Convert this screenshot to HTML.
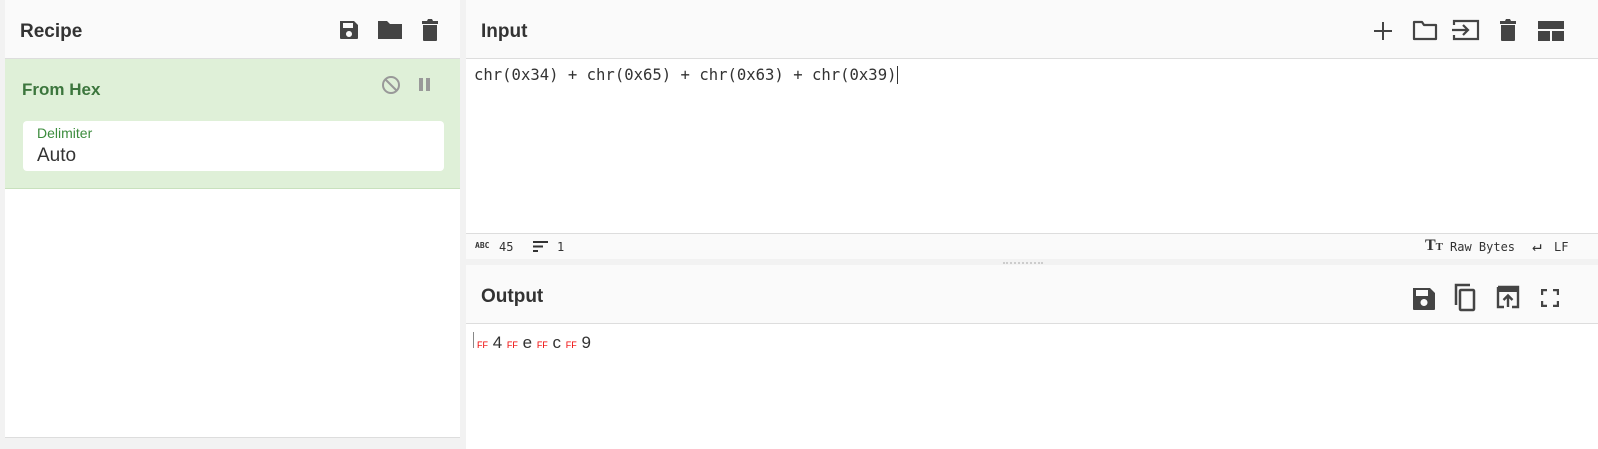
<!DOCTYPE html>
<html><head><style>
*{box-sizing:border-box;margin:0;padding:0}
body{width:1598px;height:449px;background:#f2f2f2;font-family:"Liberation Sans",sans-serif;position:relative;overflow:hidden}
.abs{position:absolute}
.hdr{background:#fafafa;border-bottom:1px solid #ddd;height:59px}
.title{font-weight:bold;font-size:19px;color:#333;position:absolute;top:21px}
.mono{font-family:"DejaVu Sans Mono","Liberation Mono",monospace}
svg{position:absolute}
</style></head><body>
<div class="abs" style="left:5px;top:0;width:455px;height:438px;background:#fff;border-bottom:1px solid #ddd">
 <div class="hdr" style="position:relative"><div class="title" style="left:15px">Recipe</div>
  <svg style="left:332px;top:18px" width="24" height="24" viewBox="0 0 24 24"><path fill="#444" d="M3 3h14l4 4v13a1 1 0 0 1-1 1H4a1 1 0 0 1-1-1zM6 5v5h10V5zm6 8a3 3 0 1 0 0.01 0z"/></svg>
  <svg style="left:371px;top:18px" width="28" height="24" viewBox="0 0 28 24"><path fill="#444" d="M2 3h9l3 3h12v15H2z"/></svg>
  <svg style="left:414px;top:17px" width="22" height="26" viewBox="0 0 22 26"><path fill="#444" d="M3 4h5l1-2h4l1 2h5v3H3zM4 8h14v15a1 1 0 0 1-1 1H5a1 1 0 0 1-1-1z"/></svg>
 </div>
 <div style="position:absolute;top:59px;left:0;width:455px;height:130px;background:#dff0d8;border-bottom:1px solid #c8e1bd">
  <div style="position:absolute;left:17px;top:21px;font-weight:bold;font-size:17px;color:#3c763d">From Hex</div>
  <svg style="left:376px;top:16px" width="20" height="20" viewBox="0 0 20 20"><circle cx="10" cy="10" r="8" fill="none" stroke="#999" stroke-width="2"/><path d="M4.5 4.5l11 11" stroke="#999" stroke-width="2"/></svg>
  <div style="position:absolute;left:414px;top:19px;width:4px;height:13px;background:#999"></div>
  <div style="position:absolute;left:421px;top:19px;width:4px;height:13px;background:#999"></div>
  <div style="position:absolute;left:18px;top:62px;width:421px;height:50px;background:#fff;border-radius:4px">
   <div style="position:absolute;left:14px;top:4px;font-size:14px;color:#3c8c3d">Delimiter</div>
   <div style="position:absolute;left:14px;top:24px;font-size:19px;color:#333">Auto</div>
  </div>
 </div>
</div>
<div class="abs" style="left:466px;top:0;width:1132px;height:259px;background:#fff">
 <div class="hdr" style="position:relative"><div class="title" style="left:15px">Input</div>
  <svg style="left:906px;top:20px" width="22" height="22" viewBox="0 0 22 22"><path d="M11 2v18M2 11h18" stroke="#444" stroke-width="2"/></svg>
  <svg style="left:946px;top:20px" width="26" height="21" viewBox="0 0 26 21"><path d="M2 2h8l2 3h12v14H2z" fill="none" stroke="#444" stroke-width="2.2" stroke-linejoin="round"/></svg>
  <svg style="left:986px;top:19px" width="28" height="22" viewBox="0 0 28 22"><path d="M2 6V2h24v18H2v-4" fill="none" stroke="#444" stroke-width="2.2"/><path d="M0 11h15M11 6l5 5-5 5" fill="none" stroke="#444" stroke-width="2.2"/></svg>
  <svg style="left:1033px;top:18px" width="18" height="24" viewBox="0 0 18 24"><path fill="#444" d="M1 3h5l1-2h4l1 2h5v3H1zM2 7h14v15a1 1 0 0 1-1 1H3a1 1 0 0 1-1-1z"/></svg>
  <svg style="left:1072px;top:21px" width="26" height="20" viewBox="0 0 26 20"><path fill="#444" d="M0 0h26v8H0zM0 10h12v10H0zM14 10h12v10H14z"/></svg>
 </div>
 <div class="mono" style="position:absolute;left:8px;top:66px;font-size:15.6px;color:#333">chr(0x34) + chr(0x65) + chr(0x63) + chr(0x39)<span style="border-left:1px solid #333;margin-left:1px"></span></div>
 <div style="position:absolute;left:0;top:233px;width:1132px;height:26px;background:#fafafa;border-top:1px solid #ddd" class="mono">
  <span style="position:absolute;left:9px;top:7px;font-size:8px;font-weight:bold;color:#333">ABC</span>
  <span style="position:absolute;left:33px;top:6px;font-size:12px;color:#333">45</span>
  <svg style="left:67px;top:7px" width="16" height="12" viewBox="0 0 16 12"><path d="M0 1h15M0 5.5h10M0 10h5" stroke="#333" stroke-width="2"/></svg>
  <span style="position:absolute;left:91px;top:6px;font-size:12px;color:#333">1</span>
  <span style="position:absolute;left:959px;top:3px;font-size:16px;font-weight:bold;color:#333;font-family:'Liberation Serif',serif">T<span style="font-size:11px">T</span></span>
  <span style="position:absolute;left:984px;top:6px;font-size:12px;color:#333">Raw Bytes</span>
  <span style="position:absolute;left:1066px;top:2px;font-size:16px;color:#333">↵</span>
  <span style="position:absolute;left:1088px;top:6px;font-size:12px;color:#333">LF</span>
 </div>
</div>
<div class="abs" style="left:1003px;top:262px;width:40px;height:2px;border-top:2px dotted #ccc"></div>
<div class="abs" style="left:466px;top:265px;width:1132px;height:184px;background:#fff">
 <div class="hdr" style="position:relative"><div class="title" style="left:15px">Output</div>
  <svg style="left:946px;top:22px" width="24" height="24" viewBox="0 0 24 24"><path fill="#444" d="M1 1h17l5 5v16a1 1 0 0 1-1 1H2a1 1 0 0 1-1-1zM4 3v6h12V3zm8 9a3.5 3.5 0 1 0 0.01 0z"/></svg>
  <svg style="left:986px;top:18px" width="26" height="30" viewBox="0 0 26 30"><path d="M4 22V2h14" fill="none" stroke="#444" stroke-width="2.5"/><rect x="8" y="7" width="14" height="20" rx="1" fill="none" stroke="#444" stroke-width="2.5"/></svg>
  <svg style="left:1030px;top:20px" width="24" height="24" viewBox="0 0 24 24"><path d="M2 2h20v20h-6M8 22H2V2" fill="none" stroke="#444" stroke-width="2.4"/><path fill="#444" d="M2 2h20v5H2z"/><path d="M12 22V11M7.5 15l4.5-4.5 4.5 4.5" fill="none" stroke="#444" stroke-width="2.4"/></svg>
  <svg style="left:1075px;top:24px" width="18" height="18" viewBox="0 0 18 18"><path d="M1 6V1h5M12 1h5v5M17 12v5h-5M6 17H1v-5" fill="none" stroke="#444" stroke-width="2.4"/></svg>
 </div>
 <div style="position:absolute;left:7px;top:67px;height:16px;border-left:1px solid #888"></div>
 <div style="position:absolute;left:11px;top:68px;font-size:17px;color:#333;font-family:'Liberation Sans',sans-serif"><span style="font-size:9px;color:#e00">FF</span> 4 <span style="font-size:9px;color:#e00">FF</span> e <span style="font-size:9px;color:#e00">FF</span> c <span style="font-size:9px;color:#e00">FF</span> 9</div>
</div>
</body></html>
